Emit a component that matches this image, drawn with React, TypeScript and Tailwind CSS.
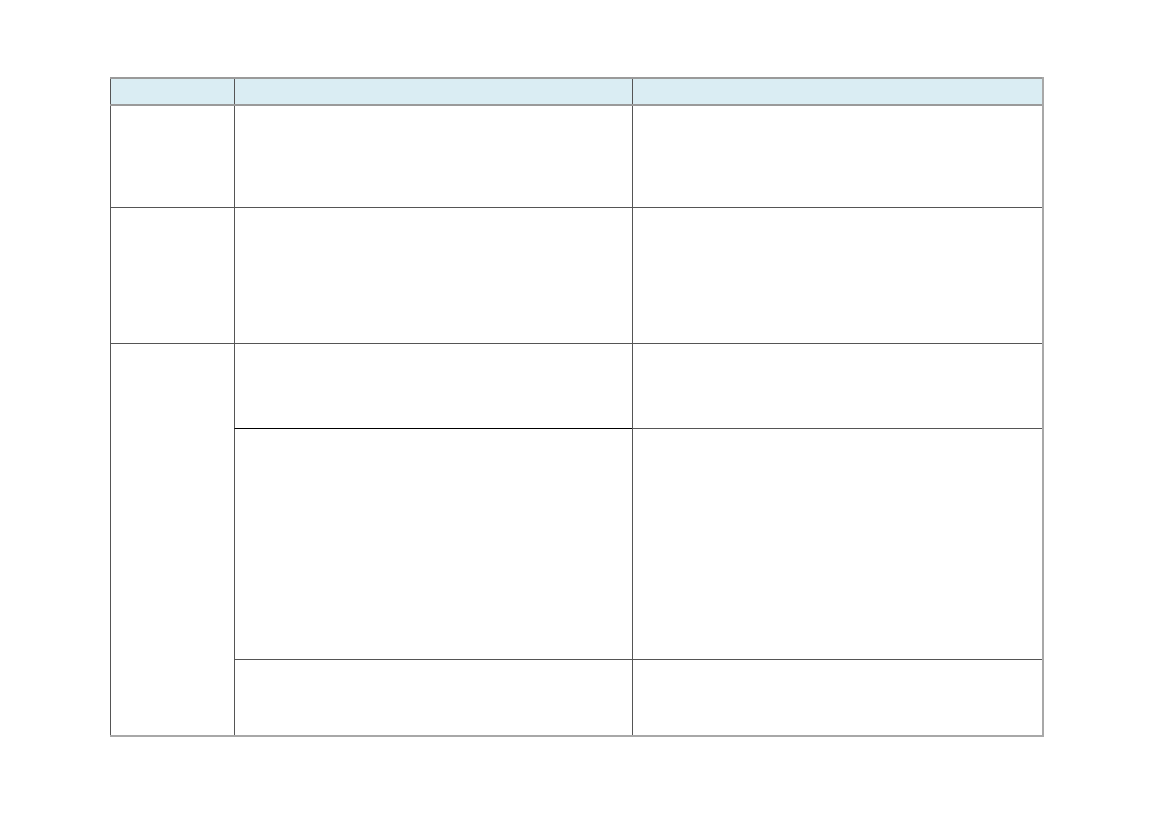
function Split({ h, top }: { h: string; top?: string }) {
  return (
    <div className={`flex ${h} ${top ?? ''}`}>
      <div className="w-[398px] shrink-0 border-l border-[#555]" />
      <div className="flex-1 border-l border-[#555]" />
    </div>
  );
}

export default function App() {
  return (
    <div className="min-h-[827px] w-full bg-white pl-[110px] pt-[77px]">
      <div className="w-[934px] border-r-2 border-[#a8a8a8]">
        {/* header band */}
        <div className="flex h-[29px] border-y-2 border-[#9a9a9a] bg-[#daedf3]">
          <div className="w-[124px] shrink-0 border-l border-[#555]" />
          <div className="w-[398px] shrink-0 border-l border-[#555]" />
          <div className="flex-1 border-l border-[#555]" />
        </div>

        <div className="border-b-2 border-[#a8a8a8]">
          <div className="flex h-[102px] border-b border-[#555]">
            <div className="w-[124px] shrink-0 border-l border-[#555]" />
            <div className="w-[398px] shrink-0 border-l border-[#555]" />
            <div className="flex-1 border-l border-[#555]" />
          </div>
          <div className="flex h-[136px] border-b border-[#555]">
            <div className="w-[124px] shrink-0 border-l border-[#555]" />
            <div className="w-[398px] shrink-0 border-l border-[#555]" />
            <div className="flex-1 border-l border-[#555]" />
          </div>
          <div className="flex h-[391px]">
            <div className="w-[124px] shrink-0 border-l border-[#555]" />
            <div className="flex flex-1 flex-col">
              <div className="flex h-[85px] border-b border-[#555]">
                <div className="w-[398px] shrink-0 border-l border-[#555]" />
                <div className="flex-1 border-l border-[#555]" />
              </div>
              <div className="relative flex h-[231px] border-b border-[#555]">
                <div className="w-[398px] shrink-0 border-l border-t border-[#555] border-t-black -mt-px" />
                <div className="flex-1 border-l border-[#555]" />
              </div>
              <Split h="flex-1" />
            </div>
          </div>
        </div>
      </div>
    </div>
  );
}
